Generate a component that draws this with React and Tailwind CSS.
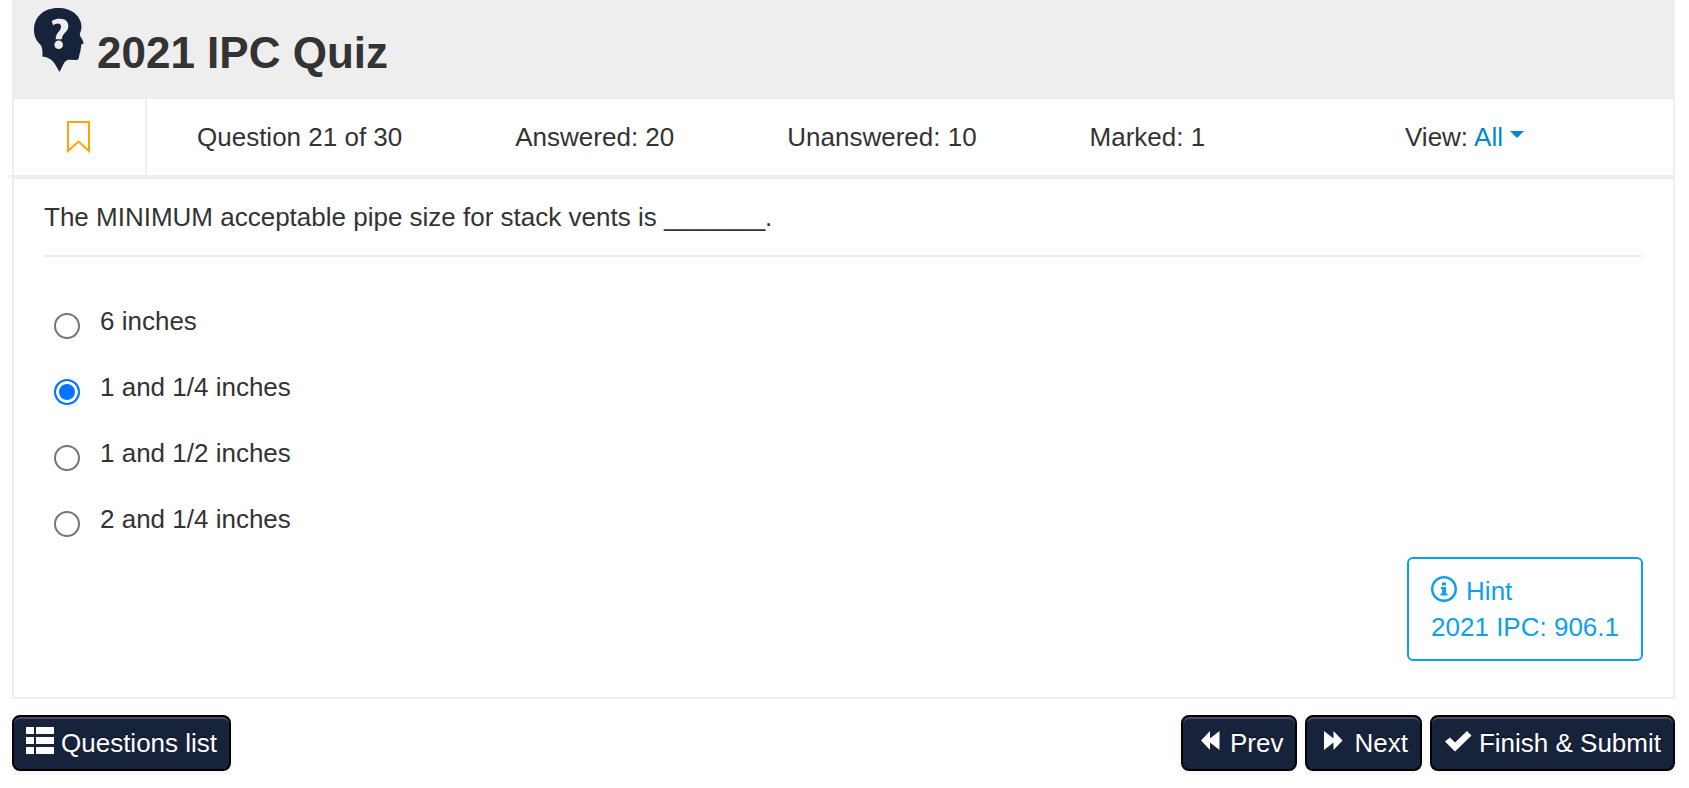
import { useState } from "react";

const stats = ["Question 21 of 30", "Answered: 20", "Unanswered: 10", "Marked: 1"];

const views = ["All", "Answered", "Unanswered", "Marked"];

const options = ["6 inches", "1 and 1/4 inches", "1 and 1/2 inches", "2 and 1/4 inches"];

function HeadIcon() {
  return (
    <svg viewBox="0 0 50 64" className="h-16 w-[50px] shrink-0" aria-hidden="true">
      <path
        fill="#17223b"
        d="M24 0C31 0 37 2 41 5.500C45.500 9.500 47.500 14 47.500 19C47.500 22 46 24.500 45.700 26.500C46 28.500 48 30.500 48.500 32L49.700 35.300C49.500 36.300 47.500 36 47 37C46.800 38.500 47.600 39 46.800 40.500C46.300 42 46.800 43 46 44.500C45.500 46 45.500 47 45 48.500C44.800 51 44.300 52 42.500 52L34.500 51.800C31.500 52.500 30.500 54 29.300 56.500L25.500 64L21.500 57C19.500 53.500 17.500 51.500 14 50C12 49 10 48.700 8.300 48.500C8.500 46 8.700 44 8.300 42C8 39.500 7.500 38 6 36.300C4 34 2.500 32.500 1.700 30.300C0.500 27.500 0 25 0 22C0 9 9.500 0 24 0Z"
      />
      <path
        fill="#eee"
        d="M17.700 13C20.500 11.300 23 10.700 26 10.700C31.500 10.700 34.300 13.500 34.300 18C34.300 24.500 28.500 24.500 27.700 31.300H21.700C21.500 24.500 27 23.500 27 18.500C27 14.500 22.500 14.700 19 17.300Z"
      />
      <circle cx="24.700" cy="36.800" r="4.300" fill="#eee" />
    </svg>
  );
}

function BookmarkIcon() {
  return (
    <svg viewBox="0 0 23 32" className="h-8 w-[23px]" aria-hidden="true">
      <path fill="none" stroke="#ffa500" strokeWidth="2" d="M1 1H22V30L11.500 20.500L1 30Z" />
    </svg>
  );
}

function InfoIcon() {
  return (
    <svg viewBox="0 0 26 26" className="h-[26px] w-[26px]" aria-hidden="true">
      <circle cx="13" cy="13" r="11.800" fill="none" stroke="currentColor" strokeWidth="2.400" />
      <path fill="currentColor" d="M11 6.500H15V9.500H11ZM10 11H15V17.500H16.500V19.500H9.500V17.500H11.200V13H10Z" />
    </svg>
  );
}

function ListIcon() {
  return (
    <svg viewBox="0 0 28 28" className="h-7 w-7" aria-hidden="true">
      <path
        fill="currentColor"
        d="M0 0H8V7H0ZM10 0H28V7H10ZM0 10H8V17H0ZM10 10H28V17H10ZM0 20H8V27H0ZM10 20H28V27H10Z"
      />
    </svg>
  );
}

function PrevIcon() {
  return (
    <svg viewBox="0 0 28 28" className="h-7 w-7" aria-hidden="true">
      <path fill="currentColor" d="M6 13.500L15 4V11.500L24.500 4V23L15 15.500V23Z" />
    </svg>
  );
}

function NextIcon() {
  return (
    <svg viewBox="0 0 28 28" className="h-7 w-7" aria-hidden="true">
      <path fill="currentColor" d="M23.500 13.500L14.500 4V11.500L5 4V23L14.500 15.500V23Z" />
    </svg>
  );
}

function CheckIcon() {
  return (
    <svg viewBox="0 0 28 28" className="h-7 w-7" aria-hidden="true">
      <path fill="currentColor" d="M1 14.500L6 10.500L11 15.500L23 4L27.500 8.500L11 24.500Z" />
    </svg>
  );
}

function DarkButton({ icon: Icon, children }) {
  return (
    <button
      type="button"
      className="flex items-start gap-[7px] rounded-lg border-2 border-black bg-[#17223b] px-3 py-2 text-white shadow-[inset_0_2px_0_rgba(255,255,255,0.2),0_2px_4px_rgba(0,0,0,0.05)] [text-shadow:0_-2px_0_rgba(0,0,0,0.25)]"
    >
      <span className="mt-0.5">
        <Icon />
      </span>
      {children}
    </button>
  );
}

export default function App() {
  const [selected, setSelected] = useState("1 and 1/4 inches");

  return (
    <div className="bg-white pr-3.5 pb-4 pl-3 font-['Liberation_Sans',Arial,sans-serif] text-[26px] leading-9 text-[#333]">
      <header className="flex items-start gap-[13px] bg-[#eee] px-[22px] pt-2 pb-[21px]">
        <HeadIcon />
        <h1 className="pt-5 text-[44px] leading-[50px] font-bold">2021 IPC Quiz</h1>
      </header>

      <div className="flex border-x-2 border-[#eee]">
        <button
          type="button"
          aria-label="Bookmark"
          className="flex h-19 w-[133px] shrink-0 items-center justify-center border-r-2 border-[#eee] pr-0.5"
        >
          <BookmarkIcon />
        </button>
        <div className="flex grow items-center gap-[113px] pr-[149px] pl-[50px]">
          {stats.map((item) => (
            <span key={item} className="whitespace-nowrap">
              {item}
            </span>
          ))}
          <div className="ml-auto flex">
            <label htmlFor="view" className="mr-1.5">
              View:
            </label>
            <div className="relative">
              <select
                id="view"
                className="h-9 appearance-none pr-[21px] leading-9 text-[#08c] [field-sizing:content]"
              >
                {views.map((view) => (
                  <option key={view}>{view}</option>
                ))}
              </select>
              <svg
                viewBox="0 0 14 7"
                className="pointer-events-none absolute top-3 right-0 h-[7px] w-3.5"
                aria-hidden="true"
              >
                <path fill="#08c" d="M0 0H14L7 7Z" />
              </svg>
            </div>
          </div>
        </div>
      </div>
      <div className="-ml-1 h-0.5 bg-[#eee]" />

      <main className="border-2 border-[#eee] px-[30px] pt-5 pb-9">
        <p className="border-b-2 border-[#eee] pb-5">
          The MINIMUM acceptable pipe size for stack vents is _______.
        </p>

        <div className="mt-[46px] space-y-[30px] pl-2.5">
          {options.map((option) => (
            <label key={option} className="flex w-fit items-start gap-5">
              <input
                type="radio"
                name="answer"
                checked={selected === option}
                onChange={() => setSelected(option)}
                className="mt-2.5 h-[26px] w-[26px] appearance-none rounded-full border-2 border-[#767676] bg-white checked:border-[#0075ff] checked:bg-[#0075ff] checked:shadow-[inset_0_0_0_3px_#fff]"
              />
              {option}
            </label>
          ))}
        </div>

        <div className="mt-5 ml-auto w-fit rounded-md border-2 border-[#0d9ff0] px-[22px] py-3.5 text-[#0d9ff0]">
          <div className="flex items-start gap-[9px]">
            <span className="mt-[3px]">
              <InfoIcon />
            </span>
            Hint
          </div>
          <div>2021 IPC: 906.1</div>
        </div>
      </main>

      <footer className="mt-4 flex gap-2">
        <DarkButton icon={ListIcon}>Questions list</DarkButton>
        <div className="ml-auto flex gap-2">
          <DarkButton icon={PrevIcon}>Prev</DarkButton>
          <DarkButton icon={NextIcon}>Next</DarkButton>
          <DarkButton icon={CheckIcon}>Finish &amp; Submit</DarkButton>
        </div>
      </footer>
    </div>
  );
}
